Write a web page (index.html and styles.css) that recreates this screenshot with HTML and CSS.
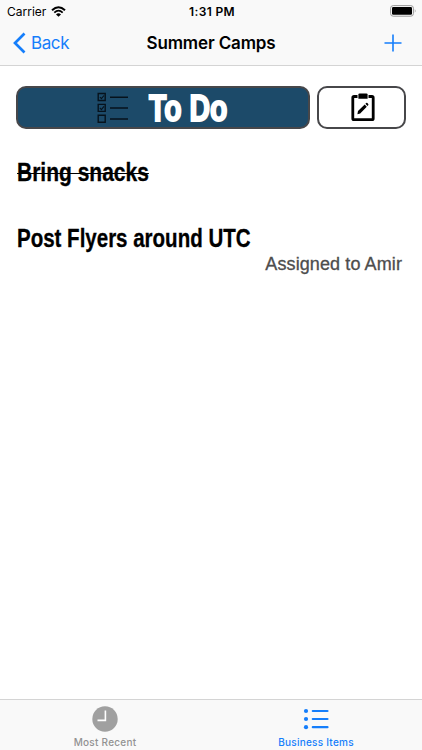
FILE: index.html
```html
<!DOCTYPE html>
<html lang="en">
<head>
    <title>Summer Camps</title>
    <meta charset="UTF-8">
    <meta name="viewport" content="width=device-width, initial-scale=1">
    <link rel="stylesheet" href="styles.css">
</head>
<body>
    <header class="top">
        <div class="status-bar">
            <div class="carrier">
                <span>Carrier</span>
                <svg width="15" height="11" viewBox="0 0 15 11">
                    <path d="M1 4.2 Q7.5 -1.7 14 4.2" fill="none" stroke="#000" stroke-width="2"/>
                    <path d="M3.3 6.6 Q7.5 2.7 11.7 6.6" fill="none" stroke="#000" stroke-width="1.8"/>
                    <path d="M5 8.4 Q7.5 6.2 10 8.4 L7.5 10.8 Z"/>
                </svg>
            </div>
            <div class="time">1:31 PM</div>
            <div class="battery">
                <svg width="27" height="12" viewBox="0 0 27 12">
                    <rect x=".6" y=".6" width="22.8" height="10.6" rx="2.6" fill="none" stroke="#999"/>
                    <rect x="2" y="2" width="20" height="7.8" rx="1.2"/>
                    <path d="M24.8 4 Q26.6 5.9 24.8 7.8 Z" fill="#999"/>
                </svg>
            </div>
        </div>
        <nav class="nav-bar">
            <a class="back">
                <svg width="13" height="22" viewBox="0 0 13 22">
                    <path d="M11.5 1.5 L2 11 L11.5 20.5" fill="none" stroke="#157efb" stroke-width="2.7"/>
                </svg>
                <span>Back</span>
            </a>
            <h1>Summer Camps</h1>
            <a class="add">
                <svg width="18" height="18" viewBox="0 0 18 18">
                    <path d="M9 .5 V17.5 M.5 9 H17.5" stroke="#157efb" stroke-width="1.6"/>
                </svg>
            </a>
        </nav>
    </header>

    <main>
        <div class="buttons">
            <button class="todo">
                <svg width="32" height="32" viewBox="0 0 32 32" fill="none" stroke="#06121c" stroke-width="1.4">
                    <path d="M1.2 1.5 h7 v7 h-7 z M1.2 12.4 h7 v7 h-7 z M1.2 23.3 h7 v7 h-7 z"/>
                    <path d="M2.9 5 L4.4 6.7 L7 3.5 M2.9 15.9 L4.4 17.6 L7 14.4" stroke-width="1.1"/>
                    <path d="M13 5.2 h18 M13 16 h18 M13 27 h18"/>
                </svg>
                <span>To Do</span>
            </button>
            <button class="notes">
                <svg width="24" height="29" viewBox="0 0 24 29">
                    <path d="M6.5 3.5 H3 Q1.8 3.5 1.8 4.7 V25.5 Q1.8 26.7 3 26.7 H21 Q22.2 26.7 22.2 25.5 V4.7 Q22.2 3.5 21 3.5 H17.5" fill="none" stroke="#000" stroke-width="2.8"/>
                    <path d="M7.4 1.6 Q7.4 .4 8.6 .4 H15.4 Q16.6 .4 16.6 1.6 V5.8 H7.4 Z"/>
                    <path d="M6.4 21.2 L7 18.1 L13.7 11.5 L15.8 13.7 L9.2 20.4 Z M14.4 10.8 L15.2 10.1 Q15.8 9.6 16.4 10.1 L17.2 11 Q17.7 11.6 17.2 12.2 L16.5 13 Z"/>
                </svg>
            </button>
        </div>

        <div class="item">
            <div class="item-title done"><span>Bring snacks</span></div>
        </div>
        <div class="item">
            <div class="item-title"><span>Post Flyers around UTC</span></div>
            <div class="assigned">Assigned to Amir</div>
        </div>
    </main>

    <footer class="tab-bar">
        <a class="tab">
            <svg width="26" height="26" viewBox="0 0 26 26">
                <circle cx="13" cy="13" r="12.7" fill="#a0a0a0"/>
                <path d="M13.4 4.5 V14.4 H5.5" fill="none" stroke="#fff" stroke-width="1.6"/>
            </svg>
            <span>Most Recent</span>
        </a>
        <a class="tab active">
            <svg width="26" height="26" viewBox="0 0 26 26" fill="#157efb">
                <circle cx="3" cy="5" r="2.1"/>
                <circle cx="3" cy="13" r="2.1"/>
                <circle cx="3" cy="21.2" r="2.1"/>
                <path d="M9.8 5 H24.5 M9.8 13 H24.5 M9.8 21.2 H24.5" stroke="#157efb" stroke-width="2.2" stroke-linecap="round"/>
            </svg>
            <span>Business Items</span>
        </a>
    </footer>
</body>
</html>
```

FILE: styles.css
```css
* {
    box-sizing: border-box;
}

body {
    font-family: Inter, "Liberation Sans", sans-serif;
    margin: 0;
    height: 750px;
    display: flex;
    flex-direction: column;
    background: white;
    color: black;
    overflow: hidden;
}

svg {
    display: block;
    flex: none;
}

/* Status and navigation */
.top {
    height: 66px;
    background: #f9f9f9;
    border-bottom: 1px solid #d4d4d4;
}

.status-bar {
    display: grid;
    grid-template-columns: 1fr auto 1fr;
    align-items: center;
    height: 22px;
    padding: 0 5px 0 7px;
    font-size: 12px;
}

.carrier {
    display: flex;
    align-items: center;
    gap: 5px;
}

.time {
    font-weight: 600;
    letter-spacing: 0.35px;
}

.battery {
    justify-self: end;
}

.nav-bar {
    display: grid;
    grid-template-columns: 1fr auto 1fr;
    align-items: center;
    height: 42px;
    padding: 0 20px;
}

.back {
    display: flex;
    align-items: center;
    gap: 5px;
    margin-left: -7px;
    color: #157efb;
    font-size: 17px;
    letter-spacing: -0.4px;
}

h1 {
    margin: 0;
    font-size: 17px;
    font-weight: 600;
    letter-spacing: -0.15px;
}

.add {
    justify-self: end;
}

/* To do list */
main {
    flex: 1;
    padding: 20px 16px 0;
}

.buttons {
    display: flex;
    gap: 7px;
}

button {
    display: flex;
    align-items: center;
    justify-content: center;
    height: 43px;
    padding: 0;
    border: 2px solid #47474a;
    border-radius: 10px;
    background: white;
}

.todo {
    width: 294px;
    justify-content: flex-start;
    padding-left: 79px;
    gap: 20px;
    background: #1c4a69;
}

.todo span {
    padding-top: 2px;
    color: white;
    font: bold 36px/40px "Liberation Sans", sans-serif;
    transform: scaleX(0.79);
    transform-origin: left;
    -webkit-text-stroke: 2px white;
    white-space: nowrap;
}

.notes {
    width: 89px;
    padding-left: 2px;
}

.item {
    height: 66px;
    padding: 26px 0 0 1px;
}

.item-title span {
    display: inline-block;
    font: bold 25px/34px "Liberation Sans", sans-serif;
    transform: scaleX(0.82);
    transform-origin: left;
    white-space: nowrap;
    -webkit-text-stroke: 0.3px black;
}

.item-title.done span {
    transform: scaleX(0.84);
    text-decoration: line-through;
    text-decoration-thickness: 1px;
}

.assigned {
    padding-right: 4px;
    text-align: right;
    font: 18px/18px "Liberation Sans", sans-serif;
    letter-spacing: 0.1px;
    color: #4d4d4d;
    -webkit-text-stroke: 0.3px #4d4d4d;
}

/* Tabs */
.tab-bar {
    display: flex;
    height: 51px;
    background: #f9f9f9;
    border-top: 1px solid #d4d4d4;
}

.tab {
    flex: 1;
    display: flex;
    flex-direction: column;
    align-items: center;
    padding: 6px 1px 0 0;
    gap: 4px;
    color: #929292;
    font-size: 10px;
    font-weight: 500;
    line-height: 13px;
    letter-spacing: 0.25px;
}

.tab.active {
    color: #157efb;
}
```
